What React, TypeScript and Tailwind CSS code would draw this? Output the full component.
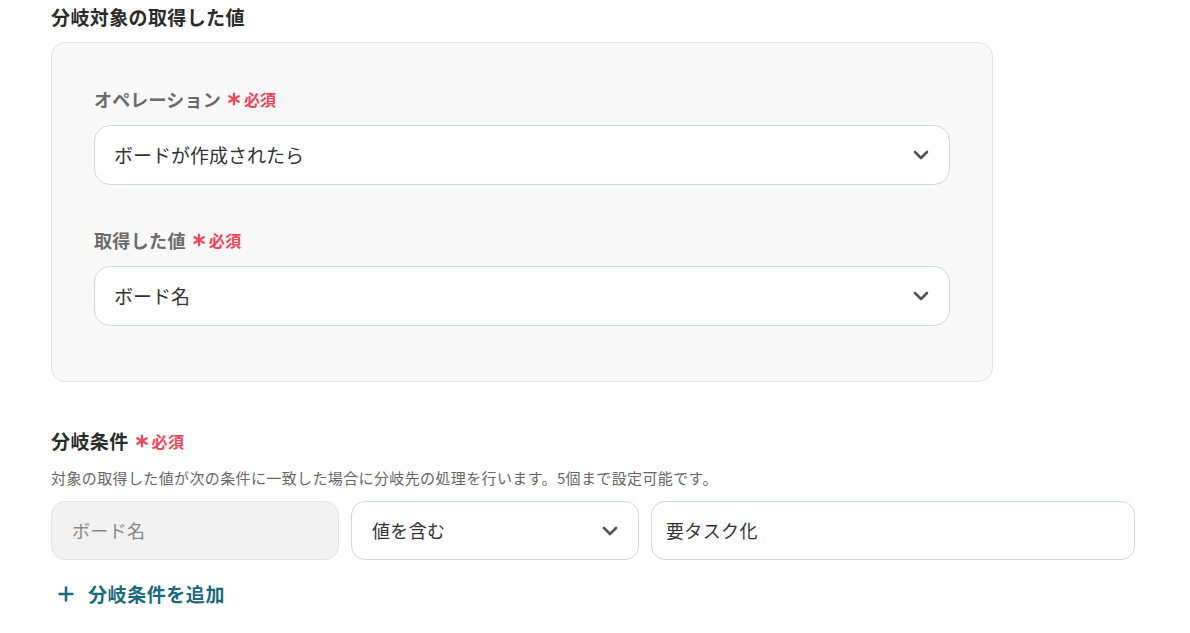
import { Plus } from "lucide-react";

const font = { fontFamily: '"Noto Sans CJK JP", "Noto Sans", sans-serif' };

function Asterisk() {
  return (
    <svg viewBox="0 0 14 14" className="mr-[3px] h-[14px] w-[14px]" fill="none" stroke="currentColor" strokeWidth={2.2} strokeLinecap="round">
      <path d="M7 1.5v11M2.2 4.2l9.6 5.6M2.2 9.8l9.6-5.6" />
    </svg>
  );
}

function Required() {
  return (
    <span className="ml-[6px] inline-flex items-center text-[16px] font-bold text-[#f0465a]">
      <Asterisk />
      必須
    </span>
  );
}

function Chevron() {
  return (
    <svg viewBox="0 0 16 10" className="h-[10px] w-4 text-[#555]" fill="none" stroke="currentColor" strokeWidth={2.6} strokeLinecap="round" strokeLinejoin="round">
      <path d="M2 2l6 6 6-6" />
    </svg>
  );
}

function Select({ value }: { value: string }) {
  return (
    <div className="flex h-[60px] items-center justify-between rounded-[16px] border border-[#d3d7de] bg-white pl-[19px] pr-[20px]">
      <span className="text-[19px] text-[#333]">{value}</span>
      <Chevron />
    </div>
  );
}

export default function App() {
  return (
    <div className="min-h-[633px] bg-white pl-[51px] pt-[5px]" style={font}>
      <h2 className="mb-[13px] text-[19px] font-bold leading-6 tracking-[0.02em] text-[#2b2b2b]">
        分岐対象の取得した値
      </h2>

      <div className="w-[942px] rounded-[14px] border border-[#e3e3e3] bg-[#f9f9f9] px-[42px] pb-[55px] pt-[44px]">
        <div className="mb-[14px] flex items-center text-[18px] font-bold leading-6 tracking-[0.01em] text-[#6b6b6b]">
          オペレーション
          <Required />
        </div>
        <Select value="ボードが作成されたら" />

        <div className="mb-[14px] mt-[43px] flex items-center text-[18px] font-bold leading-6 tracking-[0.02em] text-[#6b6b6b]">
          取得した値
          <Required />
        </div>
        <Select value="ボード名" />
      </div>

      <div className="mt-[47px] flex items-center text-[19px] font-bold leading-6 tracking-[0.02em] text-[#2b2b2b]">
        分岐条件
        <Required />
      </div>
      <p className="mt-[15px] text-[15px] leading-5 tracking-[0.025em] text-[#666]">
        対象の取得した値が次の条件に一致した場合に分岐先の処理を行います。5個まで設定可能です。
      </p>

      <div className="mt-[13px] flex gap-3">
        <div className="flex h-[59px] w-[288px] items-center rounded-[14px] border border-[#e2e2e2] bg-[#f2f2f2] pl-5">
          <span className="text-[18px] tracking-[0.02em] text-[#888]">ボード名</span>
        </div>
        <div className="flex h-[59px] w-[288px] items-center justify-between rounded-[14px] border border-[#d3d7de] bg-white pl-5 pr-[20px]">
          <span className="text-[18px] tracking-[0.02em] text-[#333]">値を含む</span>
          <Chevron />
        </div>
        <div className="flex h-[59px] w-[484px] items-center rounded-[14px] border border-[#d3d7de] bg-white pl-[14px]">
          <span className="text-[18px] tracking-[0.02em] text-[#333]">要タスク化</span>
        </div>
      </div>

      <button className="mt-[22px] flex items-center gap-[11px] pl-[4px] text-[19px] font-bold leading-6 tracking-[0.03em] text-[#1b6a7e]">
        <Plus className="h-[22px] w-[22px]" strokeWidth={2.8} />
        分岐条件を追加
      </button>
    </div>
  );
}
